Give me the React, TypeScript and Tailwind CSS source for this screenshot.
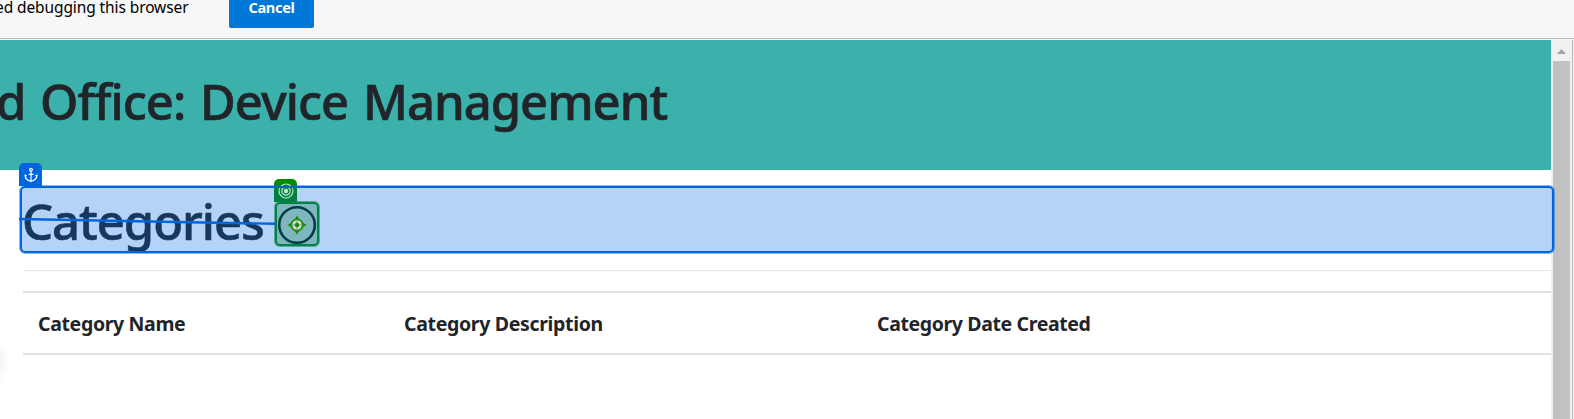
import { Anchor } from 'lucide-react';

function DebugBar() {
  return (
    <div className="flex h-[40px] shrink-0 items-start border-b border-[#f8f8f8] bg-[#b9b9b9]">
      <div className="flex h-[38px] w-full items-start bg-[#f7f7f7]">
        <span className="-mt-px -ml-[5px] w-[234px] text-[15.5px] leading-[16px] tracking-[-0.1px] whitespace-nowrap text-black">
          ed debugging this browser
        </span>
        <button className="h-[28px] w-[85px] rounded-b-[2px] bg-[#0078d7] pb-[14px] text-[14.5px] leading-[14px] font-bold tracking-[-0.3px] text-white">
          Cancel
        </button>
      </div>
    </div>
  );
}

function AnchorOverlay() {
  return (
    <>
      <div className="absolute top-[16px] left-[20px] h-[67px] w-[1534px] rounded-[5px] border-2 border-[#0066e0] bg-[#0066e0]/29 shadow-[0_0_0_1px_rgba(0,102,224,0.45)]" />
      <div className="absolute top-[-7px] left-[19px] flex h-[23px] w-[23px] items-center justify-center rounded-t-[5px] bg-[#0066e0]">
        <Anchor className="h-[16px] w-[16px] text-white" strokeWidth={1.8} />
      </div>
    </>
  );
}

function TargetOverlay() {
  return (
    <>
      <div className="absolute top-[9px] left-[274px] flex h-[23px] w-[23px] items-center justify-center rounded-t-[5px] bg-linear-to-b from-[#008c00] from-30% to-[#00803e] to-30%">
        <svg viewBox="0 0 16 16" className="h-[16px] w-[16px]" fill="none" stroke="#b9e4cf" strokeWidth="1.2">
          <circle cx="8" cy="8" r="7" />
          <circle cx="8" cy="8" r="4.2" />
          <circle cx="8" cy="8" r="1.6" fill="#b9e4cf" />
        </svg>
      </div>
      <div className="absolute top-[32px] left-[275px] h-[44px] w-[44px] rounded-[5px] border-2 border-[#008249] bg-[#80b7bf] shadow-[0_0_0_1px_rgba(0,130,73,0.5)]" />
      <svg viewBox="0 0 46 46" className="absolute top-[31px] left-[274px] h-[46px] w-[46px]" fill="none">
        <circle cx="23" cy="24" r="17.8" stroke="#003c46" strokeWidth="2.6" />
        <circle cx="23" cy="24" r="5.7" fill="#d3ddd5" stroke="#1f9108" strokeWidth="1.8" />
        <path d="M23 18v12M17 24h12" stroke="#7f9a78" strokeWidth="1" />
        <path d="M23 14.500l2.500 4h-5zM23 33.500l2.500-4h-5zM13.500 24l4-2.500v5zM32.500 24l-4-2.500v5z" fill="#168a0b" />
        <circle cx="23" cy="24" r="2.200" fill="#168a0b" />
      </svg>
      <svg viewBox="0 0 256 8" className="absolute top-[47px] left-[19px] h-[8px] w-[256px]" fill="none">
        <path d="M0 2L256 6.800" stroke="#0066e0" strokeWidth="2.400" />
      </svg>
      <div className="absolute top-[16px] left-[274px] h-[2px] w-[23px] bg-[#0068b8]" />
    </>
  );
}

function Scrollbar() {
  return (
    <div className="flex w-[23px] shrink-0">
      <div className="flex w-[21px] flex-col bg-[#f1f1f1]">
        <div className="flex h-[21px] items-center pl-[6px]">
          <svg viewBox="0 0 9 5" className="mt-[2px] h-[5px] w-[9px]" fill="#a3a3a3">
            <path d="M4.500 0L9 5H0Z" />
          </svg>
        </div>
        <div className="ml-[2px] w-[17px] grow bg-[#c1c1c1]" />
      </div>
      <div className="w-px bg-[#b9b9b9]" />
      <div className="w-px bg-[#f3f3f3]" />
    </div>
  );
}

export default function App() {
  return (
    <div className="flex h-[419px] w-[1574px] flex-col overflow-hidden bg-white font-['Noto_Sans','Open_Sans',sans-serif] text-[#212529]">
      <DebugBar />
      <div className="flex min-h-0 grow">
        <main className="relative flex w-[1551px] shrink-0 flex-col">
          <header className="flex h-[130px] shrink-0 items-start bg-[#3cb0ab] pt-[27px]">
            <h1 className="-ml-[4px] text-[49px] leading-[68px] font-medium tracking-[-1px] whitespace-nowrap [-webkit-text-stroke:0.6px_#212529] [word-spacing:3px]">
              d Office: Device Management
            </h1>
          </header>
          <section className="relative flex h-[100px] shrink-0 items-start pt-[17px] pl-[23px]">
            <h2 className="-ml-px text-[49px] leading-[68px] font-medium tracking-[-1.05px] whitespace-nowrap [-webkit-text-stroke:0.6px_#212529]">
              Categories
            </h2>
            <AnchorOverlay />
            <TargetOverlay />
          </section>
          <div className="ml-[23px] h-px shrink-0 bg-[#e5e5e5]" />
          <div className="mt-[20px] ml-[23px] grid h-[64px] shrink-0 grid-cols-[366px_473px_1fr] items-center border-y-2 border-[#dee2e6] pt-[2px] pl-[15px] text-[19.5px] font-bold">
            <span className="tracking-[-0.35px] whitespace-nowrap">Category Name</span>
            <span className="tracking-[-0.33px] whitespace-nowrap">Category Description</span>
            <span className="tracking-[-0.38px] whitespace-nowrap">Category Date Created</span>
          </div>
          <div className="absolute top-[308px] left-[-30px] h-[30px] w-[28px] rounded-full shadow-[0_0_14px_3px_rgba(0,0,0,0.09)]" />
        </main>
        <Scrollbar />
      </div>
    </div>
  );
}
